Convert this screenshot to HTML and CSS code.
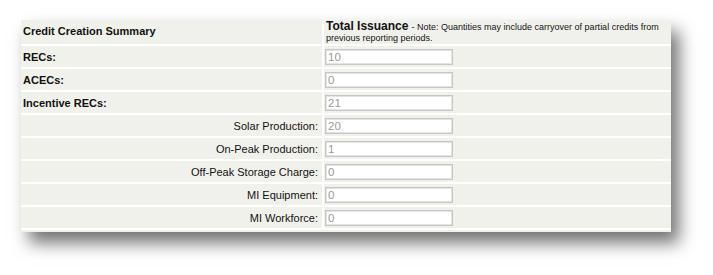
FILE: index.html
```html
<!DOCTYPE html>
<html>
<head>
  <title>Credit Creation Summary</title>
  <meta charset="UTF-8" />
  <link rel="stylesheet" href="styles.css">
</head>
<body>
  <div class="panel">
    <div class="row head">
      <div class="label">Credit Creation Summary</div>
      <div class="value">
        <div><span class="title">Total Issuance</span> <span class="note">- Note: Quantities may include carryover of partial credits from</span></div>
        <div class="note">previous reporting periods.</div>
      </div>
    </div>

    <div class="row">
      <div class="label">RECs:</div>
      <div class="value"><input type="text" value="10" readonly></div>
    </div>
    <div class="row">
      <div class="label">ACECs:</div>
      <div class="value"><input type="text" value="0" readonly></div>
    </div>
    <div class="row">
      <div class="label">Incentive RECs:</div>
      <div class="value"><input type="text" value="21" readonly></div>
    </div>
    <div class="row sub">
      <div class="label">Solar Production:</div>
      <div class="value"><input type="text" value="20" readonly></div>
    </div>
    <div class="row sub">
      <div class="label">On-Peak Production:</div>
      <div class="value"><input type="text" value="1" readonly></div>
    </div>
    <div class="row sub">
      <div class="label">Off-Peak Storage Charge:</div>
      <div class="value"><input type="text" value="0" readonly></div>
    </div>
    <div class="row sub">
      <div class="label">MI Equipment:</div>
      <div class="value"><input type="text" value="0" readonly></div>
    </div>
    <div class="row sub">
      <div class="label">MI Workforce:</div>
      <div class="value"><input type="text" value="0" readonly></div>
    </div>
  </div>
</body>
</html>
```

FILE: styles.css
```css
html {
  background: #fff;
}

body {
  margin: 0;
  min-height: 275px;
  box-sizing: border-box;
  padding: 20px 0 0 21px;
  font-family: "Liberation Sans", Arial, sans-serif;
  font-size: 11px;
  color: #111;
}

.panel {
  width: 650px;
  background: #f1f1ec;
  padding-bottom: 2px;
  box-shadow: 8px 11px 16px rgba(0, 0, 0, 0.55);
}

.row {
  display: grid;
  grid-template-columns: 303px 1fr;
  height: 21px;
  border-bottom: 2px solid #fff;
}

.row.head {
  height: 24px;
}

.label {
  display: flex;
  align-items: center;
  padding-left: 2px;
  font-size: 11px;
  font-weight: bold;
  border-right: 2px solid #fff;
}

.head .label {
  padding-bottom: 2px;
}

.sub .label {
  justify-content: flex-end;
  padding: 0 4px 0 0;
  font-weight: normal;
}

.value {
  display: flex;
  align-items: center;
  padding-left: 1px;
}

.head .value {
  display: block;
  padding: 0 6px 0 2px;
  line-height: 11px;
  white-space: nowrap;
}

.head .value div:first-child {
  line-height: 12px;
}

.head .title {
  font-size: 12px;
  font-weight: bold;
}

.head .note {
  font-size: 9px;
}

input {
  box-sizing: border-box;
  width: 128px;
  height: 16px;
  margin: 0;
  padding: 0 2px;
  border: 1px solid #c6c6c6;
  box-shadow: inset 0 0 0 1px #e4e4e4;
  background: #fff;
  font-family: "Liberation Sans", Arial, sans-serif;
  font-size: 11.5px;
  color: #999;
  outline: none;
}
```
